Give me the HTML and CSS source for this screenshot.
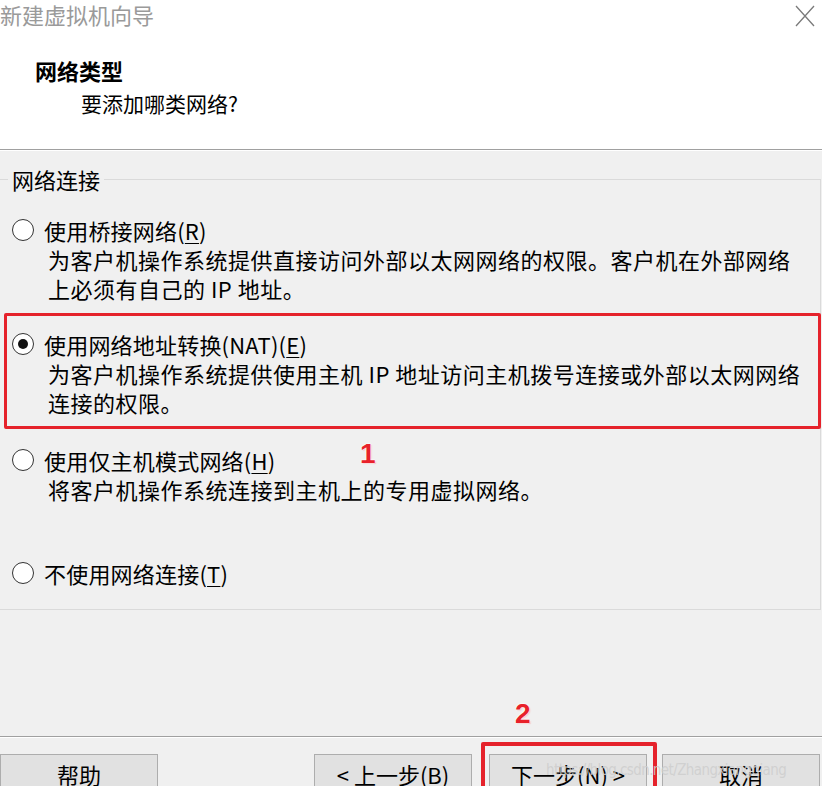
FILE: index.html
```html
<!DOCTYPE html>
<html lang="zh-CN">
<head>
<meta charset="utf-8">
<title>新建虚拟机向导</title>
<link rel="stylesheet" href="styles.css">
</head>
<body>
<div class="dialog">
  <header class="head">
    <div class="titlebar">
      <span class="title">新建虚拟机向导</span>
      <svg class="close" width="20" height="22" viewBox="0 0 20 22"><path d="M1 1 L19 21 M19 1 L1 21" stroke="#7a7a7a" stroke-width="1.3" fill="none"/></svg>
    </div>
    <h1 class="h1">网络类型</h1>
    <p class="sub">要添加哪类网络?</p>
  </header>
  <main class="main">
    <fieldset class="group">
      <legend class="legend">网络连接</legend>
      <div class="opt opt-1">
        <div class="opt-row"><span class="radio"></span><span class="lbl">使用桥接网络(<u>R</u>)</span></div>
        <p class="desc">为客户机操作系统提供直接访问外部以太网网络的权限。客户机在外部网络<br>上必须有自己的 IP 地址。</p>
      </div>
      <div class="opt opt-2 marked">
        <div class="opt-row"><span class="radio checked"></span><span class="lbl">使用网络地址转换(NAT)(<u>E</u>)</span></div>
        <p class="desc">为客户机操作系统提供使用主机 IP 地址访问主机拨号连接或外部以太网网络<br>连接的权限。</p>
      </div>
      <div class="opt opt-3">
        <div class="opt-row"><span class="radio"></span><span class="lbl">使用仅主机模式网络(<u>H</u>)</span></div>
        <p class="desc">将客户机操作系统连接到主机上的专用虚拟网络。</p>
        <span class="num num-1">1</span>
      </div>
      <div class="opt opt-4">
        <div class="opt-row"><span class="radio"></span><span class="lbl">不使用网络连接(<u>T</u>)</span></div>
      </div>
    </fieldset>
    <div class="spacer"><span class="num num-2">2</span></div>
    <footer class="foot">
      <button class="btn btn-help">帮助</button>
      <button class="btn btn-prev">&lt; 上一步(<u>B</u>)</button>
      <button class="btn btn-next marked2">下一步(<u>N</u>) &gt;</button>
      <button class="btn btn-cancel">取消</button>
      <span class="wm">https://blog.csdn.net/Zhangxiangqiang</span>
    </footer>
  </main>
</div>
</body>
</html>
```
FILE: styles.css
```css
html, body {
  margin: 0;
  padding: 0;
}
body {
  width: 822px;
  height: 786px;
  overflow: hidden;
  background: #f0f0f0;
  font-family: "Noto Sans CJK SC", "Microsoft YaHei", sans-serif;
  font-size: 22px;
  color: #000;
}
.dialog {
  width: 822px;
  height: 786px;
  display: flex;
  flex-direction: column;
}
.head {
  background: #fff;
  height: 150px;
  box-sizing: border-box;
  border-bottom: 1px solid #a0a0a0;
  flex: none;
}
.titlebar {
  display: flex;
  justify-content: space-between;
  align-items: center;
  height: 30px;
}
.title {
  color: #9a9a9a;
  font-size: 22px;
  line-height: 30px;
  margin-top: -2px;
}
.close {
  margin-right: 7px;
  margin-top: 1px;
}
.h1 {
  margin: 25px 0 0 35px;
  font-size: 22px;
  font-weight: bold;
  line-height: 30px;
}
.sub {
  margin: 3px 0 0 81px;
  font-size: 21px;
  line-height: 30px;
}
.main {
  flex: 1;
  border-top: 1px solid #fff;
  display: flex;
  flex-direction: column;
}
.group {
  margin: 13px 0 0 0;
  width: 821px;
  box-sizing: border-box;
  border: 1px solid #dadada;
  border-left: none;
  padding: 0 0 21px 8px;
  min-width: 0;
}
.legend {
  padding: 0 4px;
  line-height: 30px;
  font-size: 22px;
}
.opt {
  position: relative;
  margin-left: 4px;
}
.opt-1 { margin-top: 21px; }
.opt-2 { margin-top: 26px; }
.opt-3 { margin-top: 28px; }
.opt-4 { margin-top: 54px; }
.opt-row {
  display: flex;
  align-items: center;
  height: 30px;
}
.radio {
  width: 22px;
  height: 22px;
  border: 1px solid #333;
  border-radius: 50%;
  background: #fff;
  box-sizing: border-box;
  margin-right: 10px;
  flex: none;
  position: relative;
}
.radio.checked::after {
  content: "";
  position: absolute;
  left: 5px;
  top: 5px;
  width: 10px;
  height: 10px;
  border-radius: 50%;
  background: #111;
}
.lbl {
  line-height: 30px;
  white-space: nowrap;
  letter-spacing: 0.2px;
}
u {
  text-decoration: underline;
  text-underline-offset: 3px;
  text-decoration-thickness: 1px;
}
.desc {
  margin: 0 0 0 36px;
  line-height: 29px;
  white-space: nowrap;
  letter-spacing: 0.5px;
}
.marked::before {
  content: "";
  position: absolute;
  left: -8px;
  top: -16px;
  right: -1px;
  height: 116px;
  box-sizing: border-box;
  border: 3px solid #e5222b;
  border-radius: 2px;
  pointer-events: none;
}
.num {
  position: absolute;
  color: #e8212a;
  font-family: "Liberation Sans", Arial, sans-serif;
  font-weight: bold;
  font-size: 28px;
  line-height: 30px;
  text-shadow: 0 0 2px #fff, 0 0 2px #fff, 1px 1px 1px #f5b5b5;
}
.num-1 {
  left: 348px;
  top: -6px;
}
.spacer {
  flex: none;
  height: 126px;
  position: relative;
  border-bottom: 1px solid #a0a0a0;
}
.num-2 {
  left: 515px;
  top: 89px;
}
.foot {
  position: relative;
  border-top: 1px solid #fff;
  display: flex;
  align-items: flex-start;
  padding-top: 16px;
}
.btn {
  flex: none;
  width: 158px;
  height: 40px;
  box-sizing: border-box;
  border: 1px solid #adadad;
  background: #e1e1e1;
  font-family: "Noto Sans CJK SC", sans-serif;
  font-size: 22px;
  line-height: 36px;
  padding: 0;
  color: #000;
  text-align: center;
}
.btn-help { margin-left: 0; }
.btn-prev { margin-left: 156px; }
.btn-next { margin-left: 17px; position: relative; }
.btn-cancel { margin-left: 15px; }
.marked2::before {
  content: "";
  position: absolute;
  left: -9px;
  top: -13px;
  width: 176px;
  height: 60px;
  box-sizing: border-box;
  border: 4px solid #e5222b;
  border-radius: 2px;
}
.wm {
  position: absolute;
  left: 546px;
  top: 23px;
  font-family: "DejaVu Sans Condensed", "Liberation Sans", sans-serif;
  font-size: 15px;
  letter-spacing: -0.6px;
  color: rgba(205, 205, 205, 0.85);
  white-space: nowrap;
  pointer-events: none;
}
```
